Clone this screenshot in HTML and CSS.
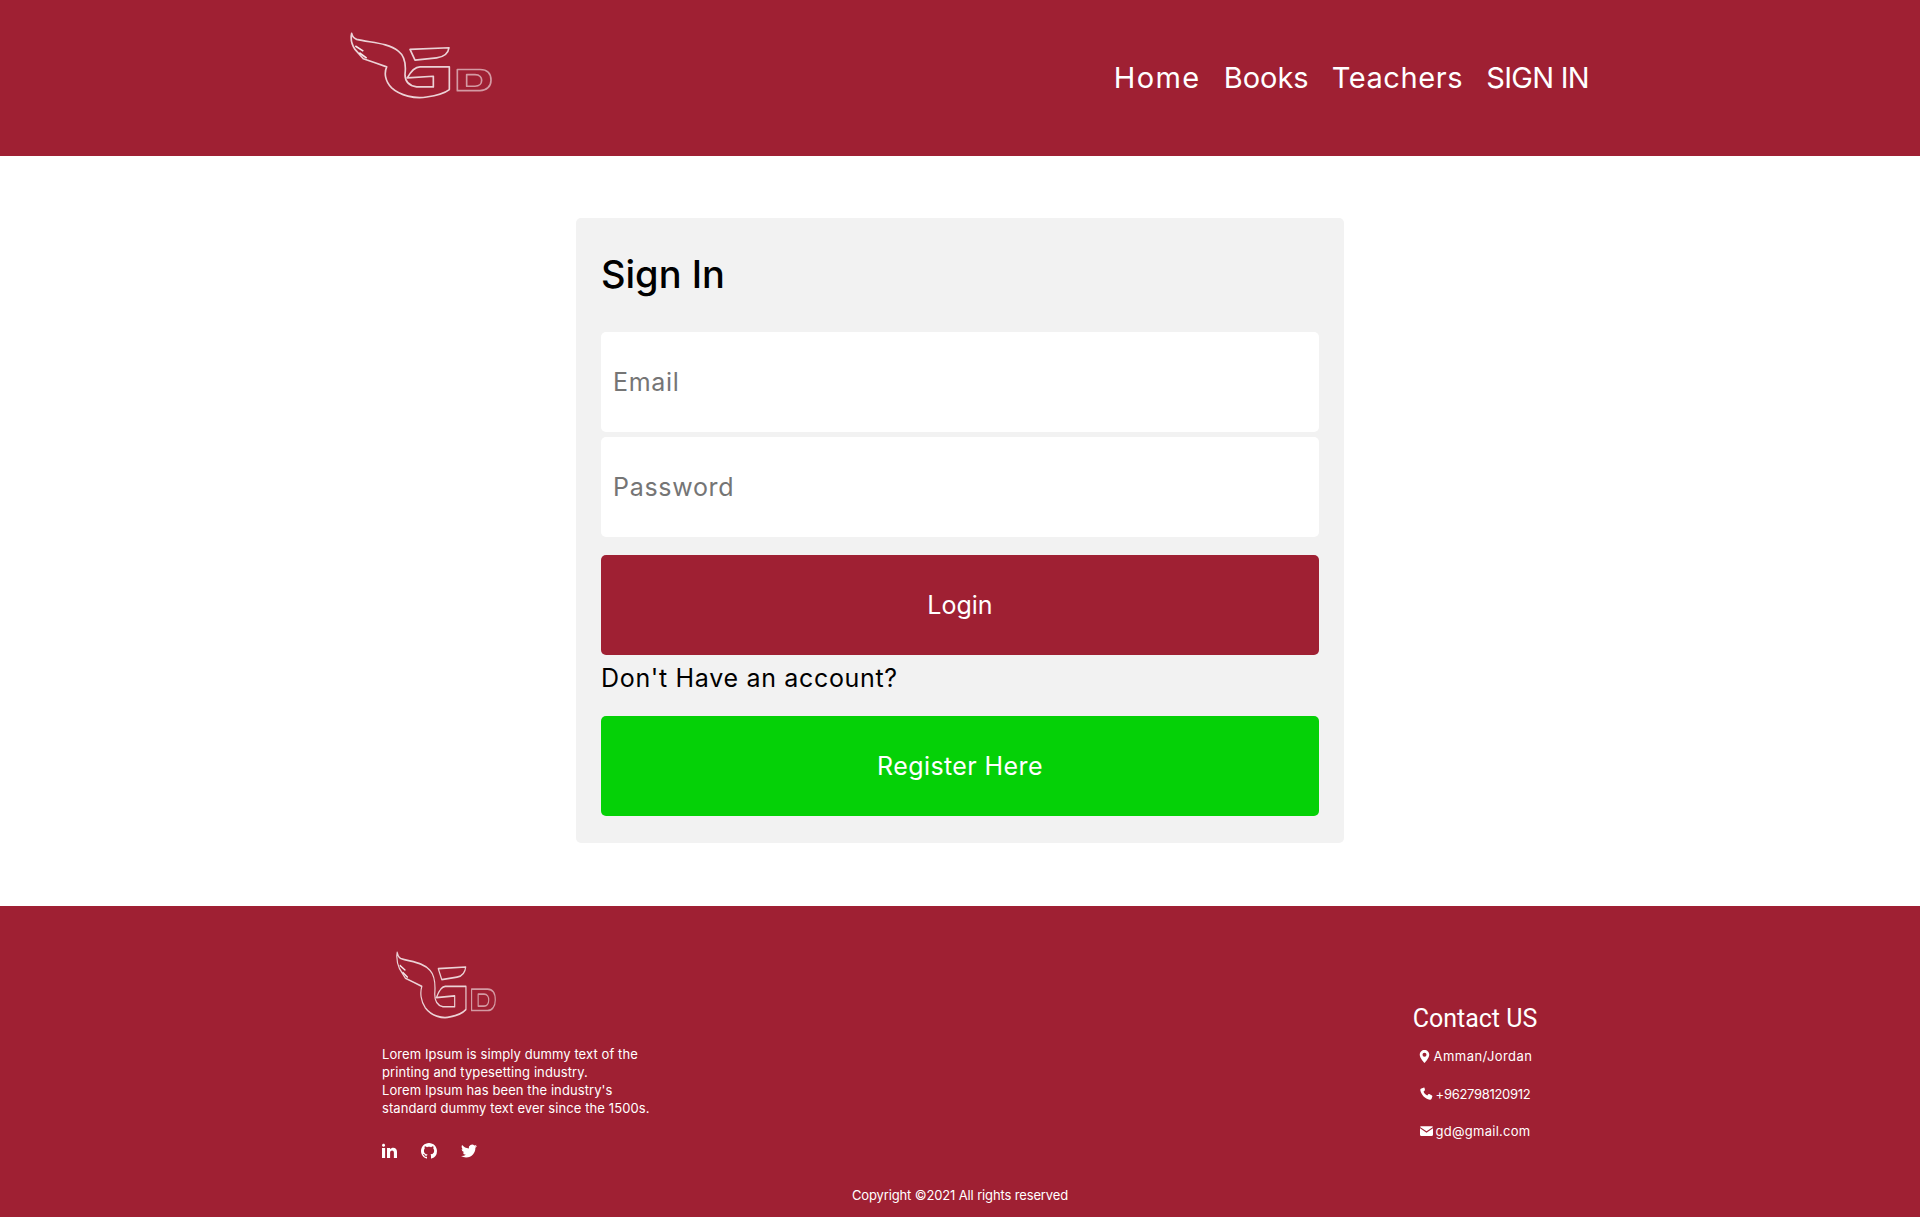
FILE: index.html
```html
<!DOCTYPE html>
<html lang="en">
<head>
<meta charset="utf-8">
<title>Sign In</title>
<link rel="stylesheet" href="styles.css">
</head>
<body>
<svg class="defs" width="0" height="0" aria-hidden="true">
  <symbol id="gd-logo" viewBox="90 68 426 200" preserveAspectRatio="none">
    <g fill="none" stroke="#fff" stroke-width="5" stroke-linejoin="round">
      <path d="M95 72C92 85 95 105 105 120L130 148C150 155 180 165 200 172C192 190 195 215 215 235C240 258 285 268 320 262C350 258 375 250 388 240L388 172L300 172C285 172 270 190 262 205L340 200L340 232L290 232C265 228 255 215 255 195C258 170 255 140 235 125C205 100 150 100 110 90C102 87 97 80 95 72Z" stroke-opacity=".8"/>
      <path d="M270 120L387 115C385 130 375 142 350 145L285 152Z" stroke-opacity=".8"/>
      <path d="M106 110L130 125M118 130L140 146" stroke-opacity=".9"/>
      <path d="M412 180H480C505 180 513 195 513 212C513 230 500 243 480 243H412ZM440 195H465C480 195 485 205 485 212C485 222 478 230 465 230H440Z" stroke-opacity=".55"/>
    </g>
  </symbol>
</svg>
<header class="site-header">
  <svg class="logo-top"><use href="#gd-logo"/></svg>
  <nav class="nav">
    <a class="nav-home" href="#">Home</a>
    <a class="nav-books" href="#">Books</a>
    <a class="nav-teachers" href="#">Teachers</a>
    <a class="nav-signin" href="#">SIGN IN</a>
  </nav>
</header>
<main class="main">
  <form class="card">
    <h1 class="title">Sign In</h1>
    <input class="field field-first" type="email" placeholder="Email">
    <input class="field" type="password" placeholder="Password">
    <button class="btn btn-login" type="button">Login</button>
    <p class="hint">Don't Have an account?</p>
    <button class="btn btn-register" type="button">Register Here</button>
  </form>
</main>
<footer class="site-footer">
  <div class="footer-row">
    <div class="about">
      <svg class="logo-bottom"><use href="#gd-logo"/></svg>
      <p class="about-text">Lorem Ipsum is simply dummy text of the<br>printing and typesetting industry.<br>Lorem Ipsum has been the industry's<br>standard dummy text ever since the 1500s.</p>
      <div class="socials">
        <svg class="social social-in" viewBox="0 0 24 24"><path d="M4.98 3.5C4.98 4.88 3.87 6 2.5 6S.02 4.88.02 3.5C.02 2.12 1.13 1 2.5 1s2.48 1.12 2.48 2.5zM5 8H0v16h5V8zm7.98 0H8.01v16h4.97v-8.4c0-4.67 6.03-5.05 6.03 0V24H24V13.87c0-7.88-8.92-7.59-11.02-3.71V8z"/></svg>
        <svg class="social" viewBox="0 0 16 16"><path d="M8 0C3.58 0 0 3.58 0 8c0 3.54 2.29 6.53 5.47 7.59.4.07.55-.17.55-.38 0-.19-.01-.82-.01-1.49-2.01.37-2.53-.49-2.69-.94-.09-.23-.48-.94-.82-1.13-.28-.15-.68-.52-.01-.53.63-.01 1.08.58 1.23.82.72 1.21 1.87.87 2.33.66.07-.52.28-.87.51-1.07-1.78-.2-3.64-.89-3.64-3.95 0-.87.31-1.59.82-2.15-.08-.2-.36-1.02.08-2.12 0 0 .67-.21 2.2.82.64-.18 1.32-.27 2-.27.68 0 1.36.09 2 .27 1.53-1.04 2.2-.82 2.2-.82.44 1.1.16 1.92.08 2.12.51.56.82 1.27.82 2.15 0 3.07-1.87 3.75-3.65 3.95.29.25.54.73.54 1.48 0 1.07-.01 1.93-.01 2.2 0 .21.15.46.55.38A8.013 8.013 0 0016 8c0-4.42-3.58-8-8-8z"/></svg>
        <svg class="social" viewBox="0 0 24 24"><path d="M23.953 4.57a10 10 0 01-2.825.775 4.958 4.958 0 002.163-2.723c-.951.555-2.005.959-3.127 1.184a4.92 4.92 0 00-8.384 4.482C7.69 8.095 4.067 6.13 1.64 3.162a4.822 4.822 0 00-.666 2.475c0 1.71.87 3.213 2.188 4.096a4.904 4.904 0 01-2.228-.616v.06a4.923 4.923 0 003.946 4.827 4.996 4.996 0 01-2.212.085 4.936 4.936 0 004.604 3.417 9.867 9.867 0 01-6.102 2.105c-.39 0-.779-.023-1.17-.067a13.995 13.995 0 007.557 2.209c9.053 0 13.998-7.496 13.998-13.985 0-.21 0-.42-.015-.63A9.935 9.935 0 0024 4.59z"/></svg>
      </div>
    </div>
    <div class="contact">
      <h2 class="contact-title">Contact US</h2>
      <p class="contact-line ls-wide"><svg class="c-icon" viewBox="0 0 24 24"><path d="M12 0C7 0 3.2 3.9 3.2 8.8 3.2 15 12 24 12 24s8.800-9 8.800-15.200C20.800 3.900 17 0 12 0zm0 12.400a3.700 3.700 0 110-7.400 3.700 3.700 0 010 7.400z"/></svg>Amman/Jordan</p>
      <p class="contact-line ls-tight"><svg class="c-icon" viewBox="0 0 24 24"><path d="M6.600 1.200 2.400 2.600C1 3.100.3 4.500.6 6c1.800 8.800 8.600 15.600 17.400 17.400 1.500.3 2.900-.4 3.400-1.800l1.400-4.200c.2-.7-.1-1.400-.7-1.800l-4.900-2.600c-.6-.3-1.300-.2-1.800.3l-2 2.200c-3.100-1.500-5.400-3.800-6.900-6.900l2.200-2c.5-.5.6-1.200.3-1.800L8.400 1.900c-.4-.6-1.100-.9-1.800-.7z"/></svg>+962798120912</p>
      <p class="contact-line ls-mid"><svg class="c-icon c-mail" viewBox="0 0 24 18"><path d="M2 0h20c1 0 1.800.6 2 1.500L12 9.500 0 1.500C.2.600 1 0 2 0zM0 4l12 8 12-8v12c0 1.100-.9 2-2 2H2c-1.100 0-2-.9-2-2z"/></svg>gd@gmail.com</p>
    </div>
  </div>
  <p class="copyright">Copyright ©2021 All rights reserved</p>
</footer>
</body>
</html>
```
FILE: styles.css
```css
* { box-sizing: border-box; }
html, body { margin: 0; padding: 0; }
body { font-family: "Inter", "Liberation Sans", sans-serif; background: #fff; color: #000; }
.defs { position: absolute; }
p, h1, h2 { margin: 0; font-weight: 400; }

.site-header {
  height: 156px;
  background: #9f2033;
  display: flex;
  justify-content: space-between;
  align-items: flex-start;
  padding: 0 331px 0 350px;
}
.logo-top { width: 142px; height: 67px; margin-top: 32px; }
.nav { display: flex; gap: 23px; margin-top: 58px; }
.nav a { color: #fff; text-decoration: none; font-size: 29px; line-height: 40px; }
.nav .nav-home { letter-spacing: 1.400px; }
.nav .nav-books { letter-spacing: 0; }
.nav .nav-teachers { letter-spacing: .6px; }
.nav .nav-signin { letter-spacing: -.7px; }

.main { padding: 62px 0 63px; display: flex; justify-content: center; }
.card {
  width: 768px;
  height: 625px;
  background: #f2f2f2;
  border-radius: 5px;
  padding: 25px;
  display: flex;
  flex-direction: column;
}
.title { font-size: 38px; line-height: 57px; font-weight: 500; height: 89px; padding-top: 3px; }
.field {
  display: block;
  width: 100%;
  height: 100px;
  border: 0;
  border-radius: 5px;
  background: #fff;
  padding: 0 12px;
  margin-bottom: 5px;
  font: 400 25px "Inter", sans-serif;
  letter-spacing: .7px;
}
.field::placeholder { color: #757575; opacity: 1; }
.btn {
  display: block;
  width: 100%;
  height: 100px;
  border: 0;
  border-radius: 5px;
  color: #fff;
  font: 400 25px "Inter", sans-serif;
}
.btn-login { background: #9f2033; margin-top: 13px; }
.hint { font-size: 25px; line-height: 38px; height: 61px; padding-top: 4px; letter-spacing: .68px; }
.btn-register { background: #05d107; letter-spacing: .4px; }

.site-footer { height: 311px; background: #9f2033; color: #fff; padding: 0 382px; position: relative; }
.footer-row { display: flex; justify-content: space-between; align-items: flex-start; height: 270px; }
.logo-bottom { display: block; width: 100px; height: 68px; margin: 45px 0 26px 14px; }
.about-text { font-size: 13px; line-height: 18px; letter-spacing: .09px; }
.socials { display: flex; gap: 24px; margin-top: 26px; }
.social { width: 16px; height: 16px; fill: #fff; }
.social-in { width: 15px; height: 15px; }
.contact { margin-top: 96px; width: 126px; text-align: center; }
.contact-title { font-family: "Roboto", sans-serif; font-size: 25px; line-height: 34px; white-space: nowrap; }
.contact-line { font-size: 13px; line-height: 18px; margin-top: 19.500px; white-space: nowrap; display: flex; justify-content: center; align-items: center; gap: 3px; }
.contact-title + .contact-line { margin-top: 11px; }
.ls-wide { letter-spacing: .45px; }
.ls-tight { letter-spacing: -.3px; }
.ls-mid { letter-spacing: .25px; }
.c-icon { width: 13px; height: 13px; fill: #fff; }
.c-mail { width: 13px; height: 10px; }
.copyright { font-size: 13px; line-height: 18px; text-align: center; position: absolute; left: 0; right: 0; bottom: 13px; letter-spacing: -.14px; }
```
